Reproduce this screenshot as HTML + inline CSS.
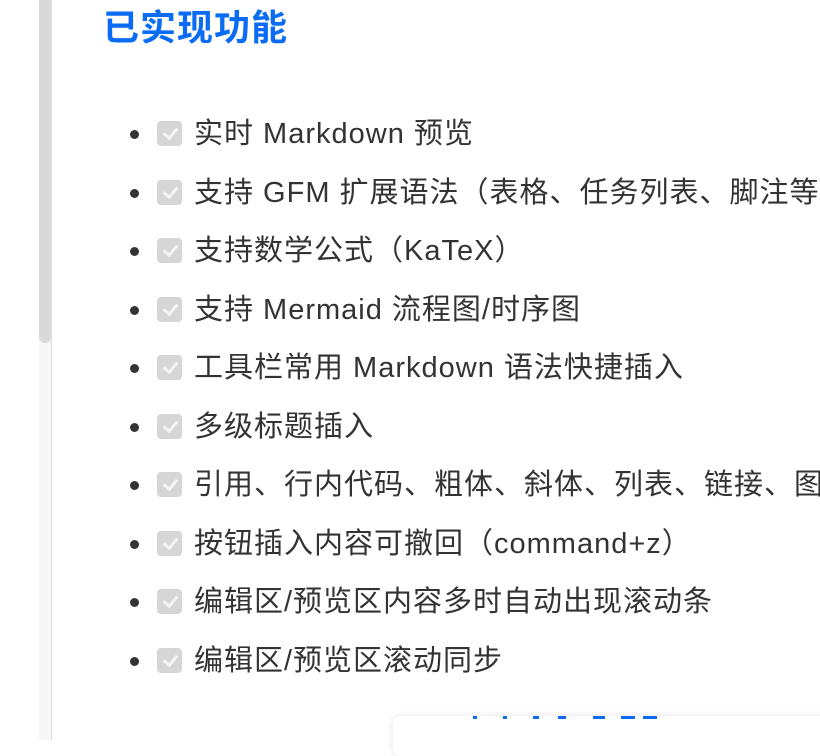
<!DOCTYPE html><html><head><meta charset="utf-8"><style>
body{margin:0;width:820px;height:740px;overflow:hidden;background:#fff;position:relative;font-family:"Liberation Sans","Noto Sans CJK SC",sans-serif}
.track{position:absolute;left:39px;top:0;width:12px;height:740px;background:#f7f7f7;border-right:1px solid #ddd}
.thumb{position:absolute;left:39px;top:-10px;width:12px;height:353px;background:#d9d9d9;border-radius:0 0 6px 6px}
h1{position:absolute;left:103px;top:6px;margin:0;font-size:36px;letter-spacing:1px;color:#0a6cf5;font-weight:bold;line-height:44px}
ul{position:absolute;left:0;top:105px;margin:0;padding:0;list-style:none;width:820px}
li{position:relative;height:58.5px;white-space:nowrap;font-size:29px;letter-spacing:1px;color:#333;line-height:58px}
li::before{content:"";position:absolute;left:130px;top:25px;width:9px;height:9px;border-radius:50%;background:#333}
.cb{position:absolute;left:157px;top:16px;width:25px;height:25px;border-radius:4px;background:#d6d6d6}
.cb::after{content:"";position:absolute;left:9px;top:4px;width:6px;height:11px;border:solid #f4f4f4;border-width:0 3px 3px 0;transform:rotate(40deg)}
li span{position:absolute;left:194px;top:0}
.card{position:absolute;left:393px;top:716px;width:440px;height:40px;background:#fff;border-radius:8px;box-shadow:0 0 8px rgba(0,0,0,.1)}
.card i{position:absolute;top:0;height:3px;background:#0a6cf5}
</style></head><body>
<div class="track"></div><div class="thumb"></div>
<h1>已实现功能</h1>
<ul>
<li><div class="cb"></div><span>实时 Markdown 预览</span></li>
<li><div class="cb"></div><span>支持 GFM 扩展语法（表格、任务列表、脚注等）</span></li>
<li><div class="cb"></div><span>支持数学公式（KaTeX）</span></li>
<li><div class="cb"></div><span>支持 Mermaid 流程图/时序图</span></li>
<li><div class="cb"></div><span>工具栏常用 Markdown 语法快捷插入</span></li>
<li><div class="cb"></div><span>多级标题插入</span></li>
<li><div class="cb"></div><span>引用、行内代码、粗体、斜体、列表、链接、图片</span></li>
<li><div class="cb"></div><span>按钮插入内容可撤回（command+z）</span></li>
<li><div class="cb"></div><span>编辑区/预览区内容多时自动出现滚动条</span></li>
<li><div class="cb"></div><span>编辑区/预览区滚动同步</span></li>
</ul>
<div class="card"><i style="left:80px;width:4px"></i><i style="left:110px;width:4px"></i><i style="left:140px;width:6px"></i><i style="left:165px;width:8px"></i><i style="left:200px;width:12px"></i><i style="left:228px;width:14px"></i><i style="left:250px;width:14px"></i></div>
</body></html>
